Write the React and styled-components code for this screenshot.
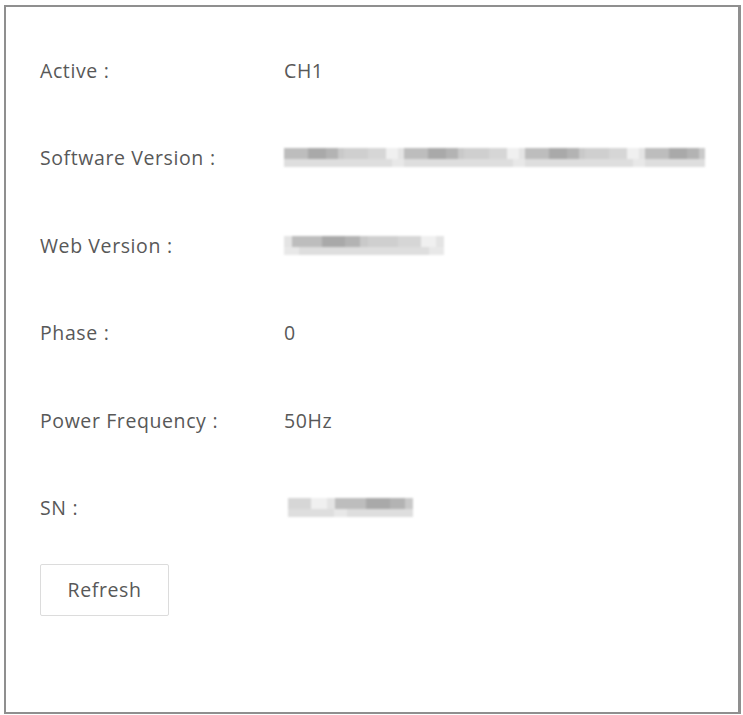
import React from 'react';
import styled, { createGlobalStyle } from 'styled-components';

const GlobalStyle = createGlobalStyle`
  html, body {
    margin: 0;
    padding: 0;
    background: #fff;
  }
  body {
    font-family: "Open Sans", "Noto Sans CJK SC", sans-serif;
  }
`;

const Page = styled.div`
  padding: 5px 2px 1px 4px;
`;

const Panel = styled.section`
  box-sizing: border-box;
  height: 709px;
  border: 2px solid #8f8f8f;
  border-right-width: 3px;
  padding: 50px 0 0 34px;
  display: flex;
  flex-direction: column;
`;

const InfoList = styled.div`
  display: flex;
  flex-direction: column;
  gap: 61.4px;
`;

const Row = styled.div`
  display: grid;
  grid-template-columns: 244px 1fr;
  align-items: center;
  height: 26px;
  font-size: 19.5px;
  letter-spacing: 0.6px;
  color: #585858;
`;

const Label = styled.span`
  white-space: nowrap;
`;

const Colon = styled.span`
  margin-left: 6px;
`;

const Value = styled.span`
  white-space: nowrap;
`;

const Mosaic = styled.span`
  display: inline-flex;
  flex-direction: column;
  width: ${p => p.$width}px;
  margin-left: ${p => p.$offset || 0}px;
  filter: blur(0.8px);
`;

const MosaicStripe = styled.span`
  display: flex;
  height: ${p => p.$h}px;
`;

const Cell = styled.span`
  flex: ${p => p.$w};
  background: ${p => p.$c};
`;

const RefreshButton = styled.button`
  margin-top: 44px;
  align-self: flex-start;
  width: 129px;
  height: 52px;
  border: 1px solid #dcdcdc;
  background: #fff;
  border-radius: 2px;
  font-family: "Open Sans", sans-serif;
  font-size: 19.5px;
  letter-spacing: 0.6px;
  color: #585858;
  cursor: pointer;
`;

const shades = ['#c9c9c9', '#bdbdbd', '#d6d6d6', '#b3b3b3', '#e4e4e4', '#cfcfcf', '#a9a9a9', '#f0f0f0'];

// pseudo random but stable block pattern for masked fields
const makeCells = (count, seed) =>
  Array.from({ length: count }, (_, i) => ({
    w: 1 + ((i * 7 + seed * 3) % 4),
    c: shades[(i * 5 + seed) % shades.length],
  }));

const Masked = ({ width, offset, seed, count }) => {
  const top = makeCells(count, seed);
  const bottom = makeCells(count, seed + 3).map(c => ({ ...c, c: c.c === '#f0f0f0' ? '#e8e8e8' : '#dedede' }));
  return (
    <Mosaic $width={width} $offset={offset}>
      <MosaicStripe $h={11}>
        {top.map((c, i) => <Cell key={i} $w={c.w} $c={c.c} />)}
      </MosaicStripe>
      <MosaicStripe $h={8}>
        {bottom.map((c, i) => <Cell key={i} $w={c.w} $c={c.c} />)}
      </MosaicStripe>
    </Mosaic>
  );
};

const rows = [
  { label: 'Active', value: 'CH1' },
  { label: 'Software Version', masked: { width: 421, seed: 1, count: 28 } },
  { label: 'Web Version', masked: { width: 160, seed: 4, count: 9 } },
  { label: 'Phase', value: '0' },
  { label: 'Power Frequency', value: '50Hz' },
  { label: 'SN', masked: { width: 125, offset: 4, seed: 2, count: 7 } },
];

export default function App() {
  return (
    <>
      <GlobalStyle />
      <Page>
        <Panel>
          <InfoList>
            {rows.map(row => (
              <Row key={row.label}>
                <Label>{row.label}<Colon>:</Colon></Label>
                {row.masked ? <Masked {...row.masked} /> : <Value>{row.value}</Value>}
              </Row>
            ))}
          </InfoList>
          <RefreshButton>Refresh</RefreshButton>
        </Panel>
      </Page>
    </>
  );
}
